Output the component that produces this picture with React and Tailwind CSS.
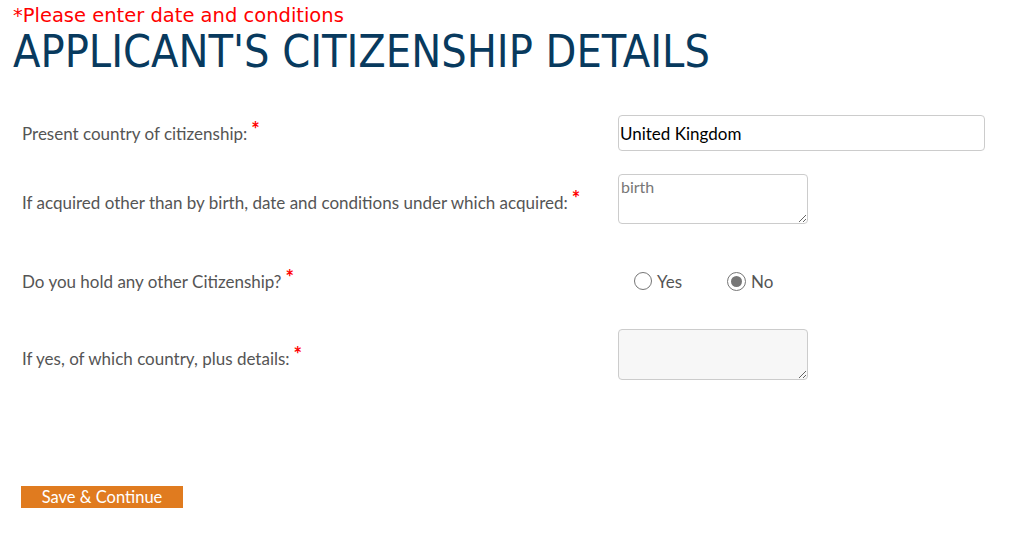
export default function App() {
  const labelCls = "text-[17px] text-[#555555] font-['Lato',sans-serif]";
  const star = <span className="text-[#ff0000] text-[20px] leading-none relative top-[-3px] ml-[4px] font-bold">*</span>;

  return (
    <div className="w-[1024px] h-[545px] bg-white relative overflow-hidden">
      <div className="pl-[13px] pt-[5px]">
        <p className="text-[#ff0000] text-[19.5px] leading-[22px] font-['DejaVu_Sans',sans-serif]">*Please enter date and conditions</p>
        <h1 className="mt-[2px] text-[#083a5e] text-[44.6px] leading-[46px] font-['DejaVu_Sans_Condensed','DejaVu_Sans',sans-serif]">APPLICANT'S CITIZENSHIP DETAILS</h1>
      </div>

      <div className="mt-[40px] pl-[22px] flex flex-col">
        <div className="flex items-center h-[36px]">
          <div className={`w-[596px] ${labelCls} pt-[2px]`}>Present country of citizenship:{star}</div>
          <input
            readOnly
            value="United Kingdom"
            className="w-[367px] h-[36px] border border-[#cccccc] rounded-[4px] px-[1px] text-[17px] text-black font-['Lato',sans-serif] outline-none"
          />
        </div>

        <div className="flex items-center mt-[23px] h-[50px]">
          <div className={`w-[596px] ${labelCls} pt-[8px]`}>If acquired other than by birth, date and conditions under which acquired:{star}</div>
          <textarea
            readOnly
            placeholder="birth"
            className="w-[190px] h-[50px] border border-[#cccccc] rounded-[4px] px-[2px] py-[2px] text-[16px] leading-[20px] font-['Lato',sans-serif] placeholder:text-[#777777] outline-none"
          />
        </div>

        <div className="flex items-center mt-[43px] h-[28px]">
          <div className={`w-[596px] ${labelCls} pt-[2px]`}>Do you hold any other Citizenship?{star}</div>
          <label className={`flex items-center ml-[16px] ${labelCls}`}>
            <span className="w-[18px] h-[18px] rounded-full border border-[#767676] bg-white" />
            <span className="ml-[5px] pt-[2px]">Yes</span>
          </label>
          <label className={`flex items-center ml-[45px] ${labelCls}`}>
            <span className="w-[19px] h-[19px] rounded-full border border-[#767676] bg-white flex items-center justify-center">
              <span className="w-[11px] h-[11px] rounded-full bg-[#767676]" />
            </span>
            <span className="ml-[5px] pt-[2px]">No</span>
          </label>
        </div>

        <div className="flex items-center mt-[34px] h-[51px]">
          <div className={`w-[596px] ${labelCls} pt-[9px]`}>If yes, of which country, plus details:{star}</div>
          <textarea
            readOnly
            className="w-[190px] h-[51px] border border-[#cccccc] rounded-[4px] bg-[#f7f7f7] outline-none"
          />
        </div>

        <div className="mt-[105px]">
          <button className="w-[162px] h-[22px] bg-[#e07b1f] text-white text-[16.5px] leading-[22px] font-['Lato',sans-serif] ml-[-1px]">Save &amp; Continue</button>
        </div>
      </div>
    </div>
  );
}
